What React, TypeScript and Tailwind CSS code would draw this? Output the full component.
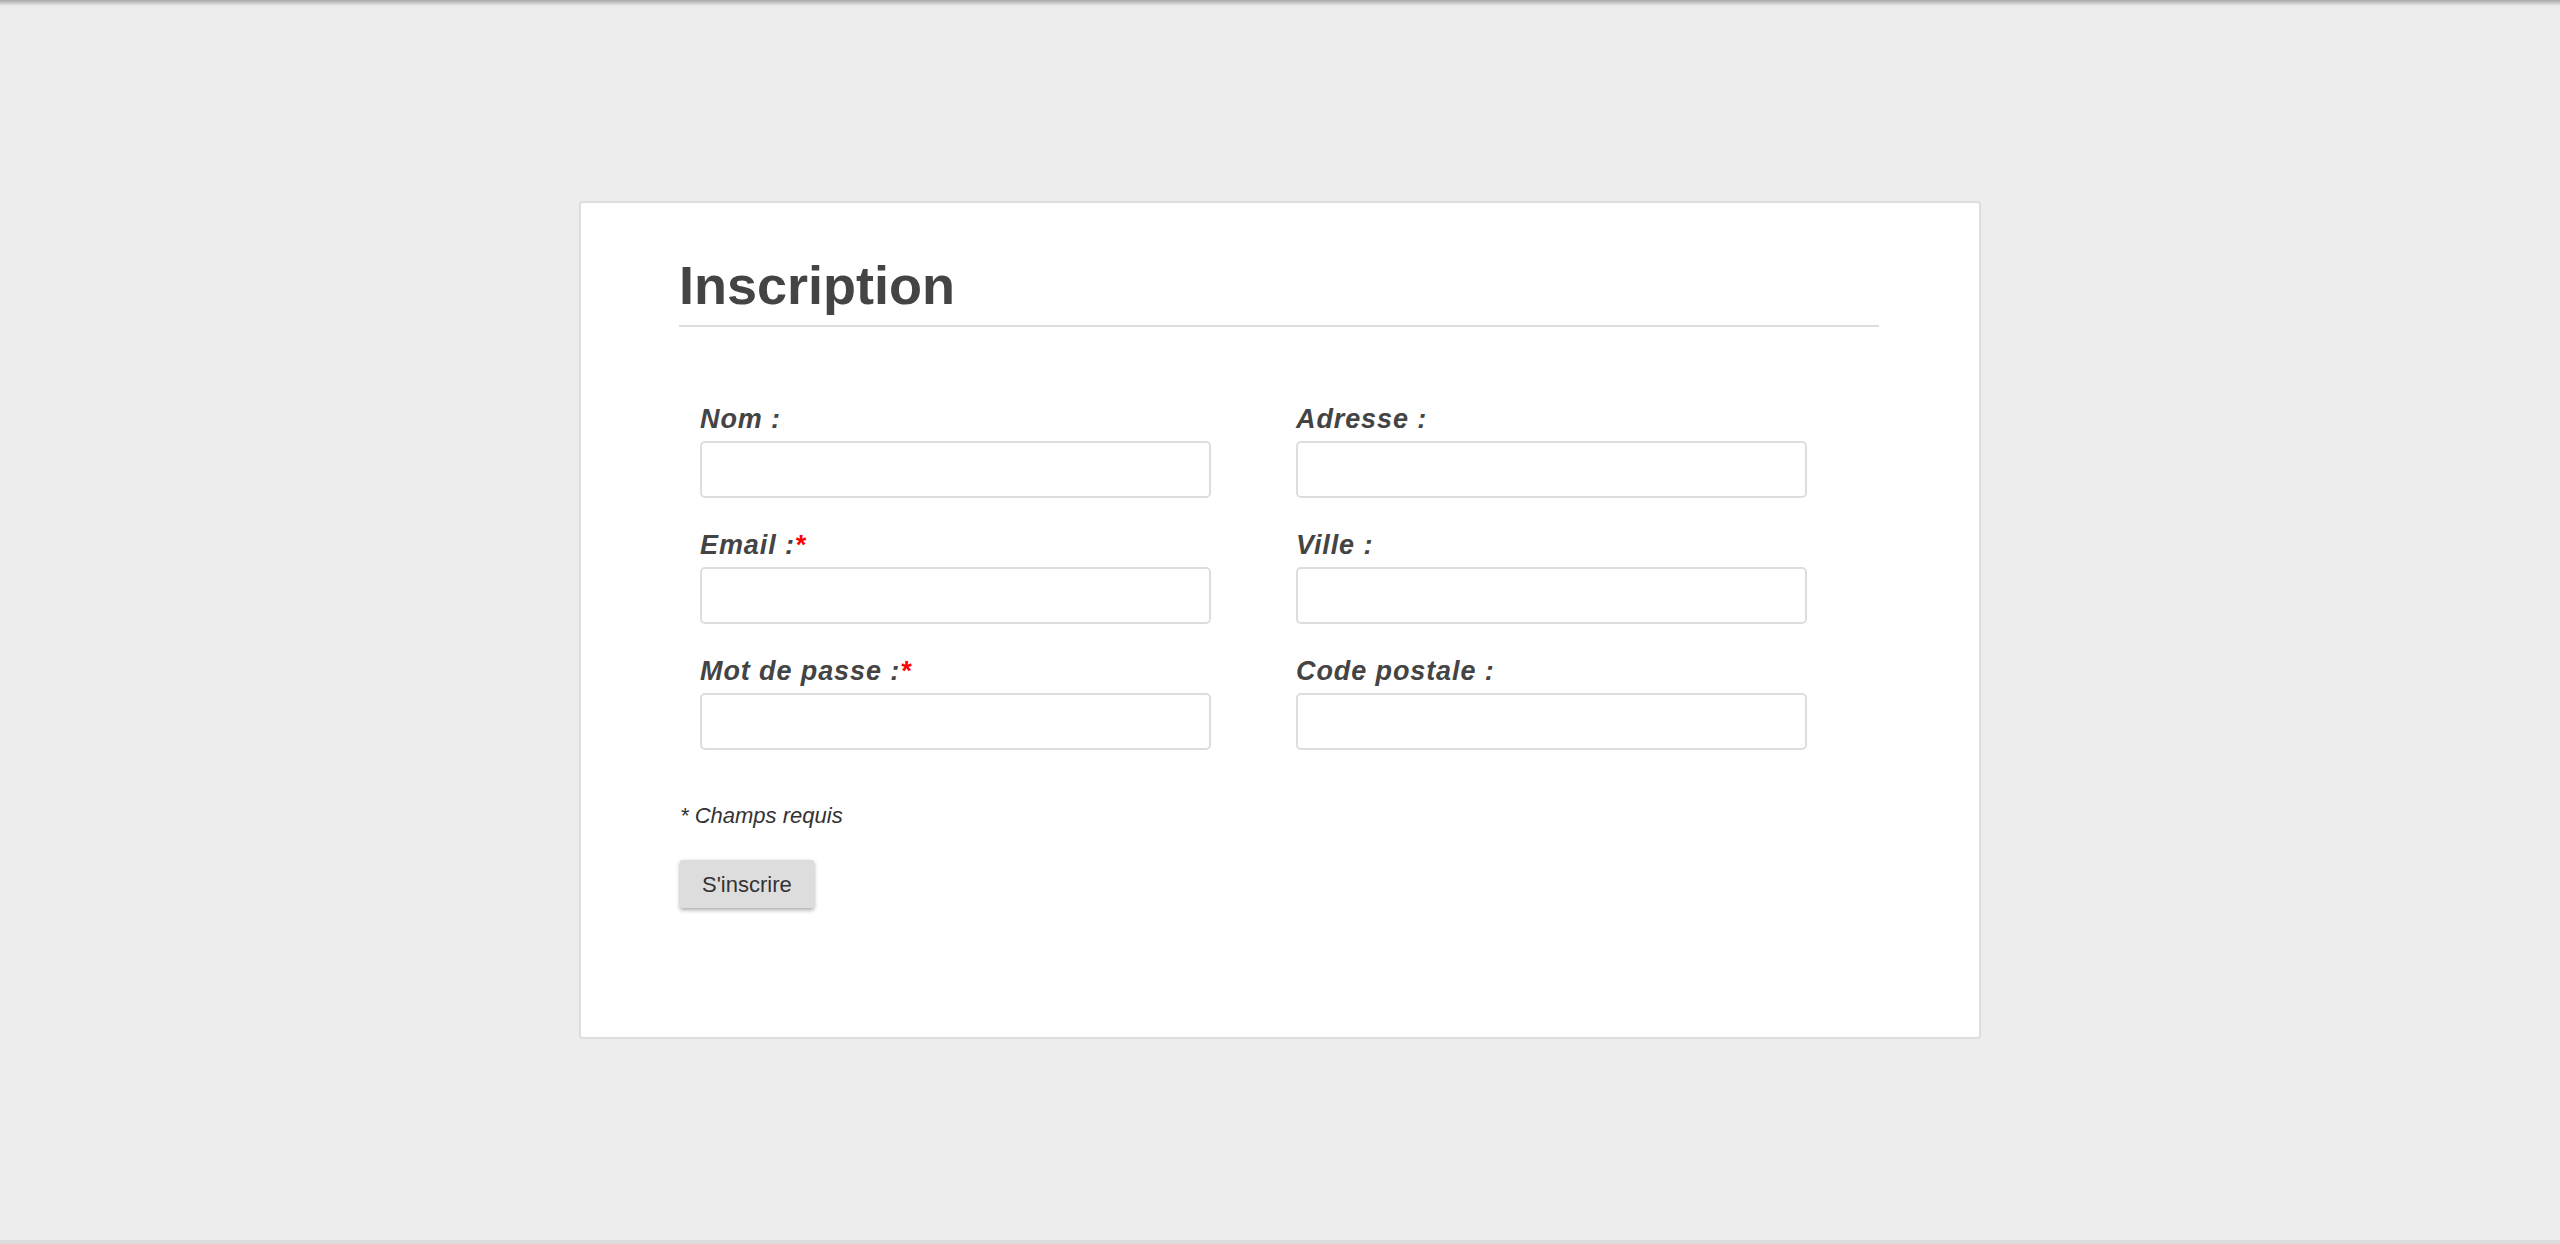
const fields = [
  { id: "nom", label: "Nom :", required: false, type: "text" },
  { id: "adresse", label: "Adresse :", required: false, type: "text" },
  { id: "email", label: "Email :", required: true, type: "email" },
  { id: "ville", label: "Ville :", required: false, type: "text" },
  { id: "password", label: "Mot de passe :", required: true, type: "password" },
  { id: "cp", label: "Code postale :", required: false, type: "text" },
];

const App = () => {
  return (
    <div className="h-[1244px] flex flex-col bg-[#ededed] font-['Liberation_Sans',Arial,sans-serif] text-[#444]">
      {/* shadow from the header sitting above the viewport */}
      <div className="h-[6px] bg-gradient-to-b from-[#a9a9a9] to-[#ededed]" />
      <main className="flex-1">
        <div className="mx-auto mt-[195px] w-[1402px] rounded-[4px] border-2 border-[#dddddd] bg-white pt-[55px] pb-[129px] pl-[98px] pr-[100px]">
          <h1 className="border-b-2 border-[#dddddd] pb-[13px] text-[54px] leading-[54px] font-bold">
            Inscription
          </h1>
          <form className="mt-[79px]" onSubmit={(e) => e.preventDefault()}>
            <div className="grid grid-cols-[511px_511px] gap-x-[85px] gap-y-[34px] pl-[21px]">
              {fields.map((f) => (
                <div key={f.id} className="flex flex-col">
                  <label
                    htmlFor={f.id}
                    className="mb-[8px] text-[27px] leading-[27px] font-bold italic tracking-[0.9px]"
                  >
                    {f.label}
                    {f.required && <span className="text-[#ff0000]">*</span>}
                  </label>
                  <input
                    id={f.id}
                    type={f.type}
                    className="h-[57px] rounded-[5px] border-2 border-[#dddddd] bg-white px-3 text-[20px] outline-none"
                  />
                </div>
              ))}
            </div>
            <p className="mt-[55px] pl-[1px] text-[22px] leading-[22px] italic text-[#333]">
              * Champs requis
            </p>
            <button
              type="submit"
              className="mt-[33px] ml-[1px] h-[48px] rounded-[2px] bg-[#dddddd] px-[22px] text-[22px] text-[#333] shadow-[0_2px_4px_rgba(0,0,0,0.35)]"
            >
              S'inscrire
            </button>
          </form>
        </div>
      </main>
      <div className="h-[4px] bg-[#dcdcdc]" />
    </div>
  );
};

export default App;
